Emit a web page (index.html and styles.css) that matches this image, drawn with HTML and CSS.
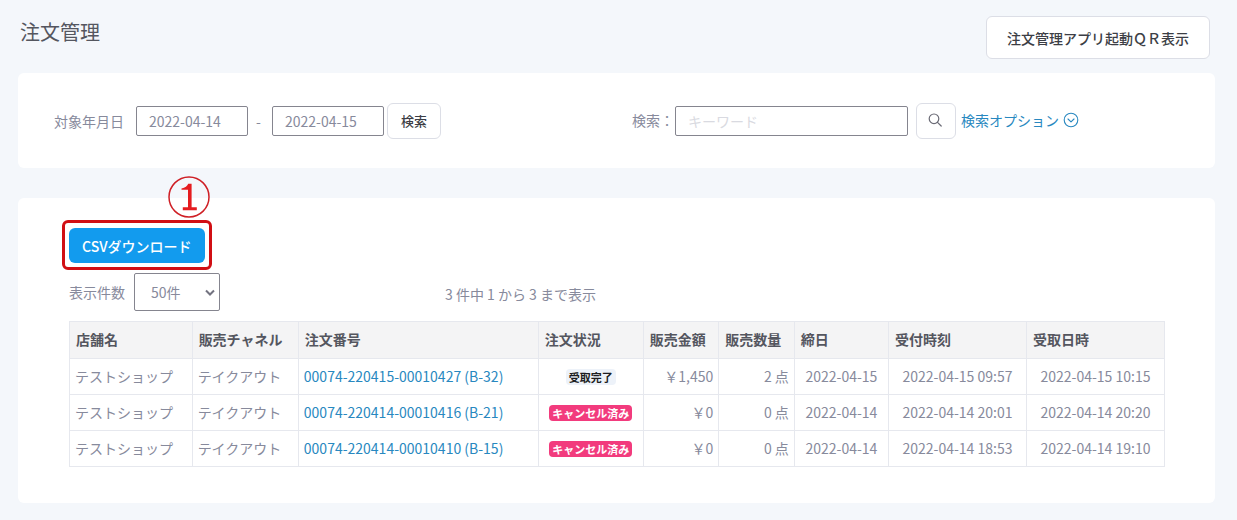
FILE: index.html
```html
<!DOCTYPE html>
<html lang="ja">
<head>
<meta charset="utf-8">
<meta name="viewport" content="width=device-width, initial-scale=1">
<title>注文管理</title>
<link rel="stylesheet" href="styles.css">
</head>
<body>
<header class="page-header">
  <h1 class="page-title">注文管理</h1>
  <button type="button" class="btn btn-large">注文管理アプリ起動ＱＲ表示</button>
</header>
<main>
  <form class="panel filters">
    <div class="filter-group">
      <label class="date-label" for="from">対象年月日</label>
      <input class="field date" id="from" type="text" value="2022-04-14">
      <span class="dash">-</span>
      <input class="field date" type="text" aria-label="終了日" value="2022-04-15">
      <button type="button" class="btn btn-search">検索</button>
    </div>
    <div class="filter-group">
      <label class="keyword-label" for="keyword">検索：</label>
      <input class="field keyword" id="keyword" type="text" placeholder="キーワード">
      <button type="button" class="btn btn-icon" aria-label="検索">
        <svg width="14" height="14" viewBox="0 0 14 14" fill="none" stroke="#6b6b76" stroke-width="1.2" stroke-linecap="round"><circle cx="6" cy="5.8" r="4.8"/><path d="M9.5 9.3l3.7 3.7"/></svg>
      </button>
      <a class="options" href="#">検索オプション<svg width="16" height="16" viewBox="0 0 16 16" fill="none" stroke="currentColor" stroke-width="1.1" stroke-linecap="round" stroke-linejoin="round"><circle cx="8" cy="8" r="6.8"/><path d="M5 7l3 2.9L11 7"/></svg></a>
    </div>
  </form>
  <section class="panel orders">
    <div class="download">
      <button type="button" class="btn-primary">CSVダウンロード</button>
      <div class="highlight"></div>
      <svg class="step" width="44" height="44" viewBox="0 0 44 44" role="img" aria-label="1"><circle cx="22" cy="22" r="20" fill="none" stroke="#cf1f25" stroke-width="1.5"/><path d="M14.5 13.5Q20 12.3 21.2 8.8H24.6V32.3H29.8V35.3H15.8V32.3H21V14.8H14.5z" fill="#e51c1f"/></svg>
    </div>
    <div class="toolbar">
      <label for="count">表示件数</label>
      <div class="select-wrap">
        <select class="field count" id="count"><option>50件</option></select>
        <svg class="chevron" width="10" height="8" viewBox="0 0 10 8" fill="none" stroke="#737380" stroke-width="2"><path d="M1 1.5l4 4 4-4"/></svg>
      </div>
      <p class="summary">3 件中 1 から 3 まで表示</p>
    </div>
    <table class="table">
      <colgroup><col class="c-shop"><col class="c-channel"><col class="c-number"><col class="c-status"><col class="c-amount"><col class="c-qty"><col class="c-close"><col class="c-time"><col class="c-time"></colgroup>
      <thead>
        <tr><th>店舗名</th><th>販売チャネル</th><th>注文番号</th><th>注文状況</th><th>販売金額</th><th>販売数量</th><th>締日</th><th>受付時刻</th><th>受取日時</th></tr>
      </thead>
      <tbody>
        <tr><td>テストショップ</td><td>テイクアウト</td><td><a href="#">00074-220415-00010427 (B-32)</a></td><td class="center"><span class="badge badge-done">受取完了</span></td><td class="right">￥1,450</td><td class="right">2 点</td><td class="center">2022-04-15</td><td class="center">2022-04-15 09:57</td><td class="center">2022-04-15 10:15</td></tr>
        <tr><td>テストショップ</td><td>テイクアウト</td><td><a href="#">00074-220414-00010416 (B-21)</a></td><td class="center"><span class="badge badge-cancel">キャンセル済み</span></td><td class="right">￥0</td><td class="right">0 点</td><td class="center">2022-04-14</td><td class="center">2022-04-14 20:01</td><td class="center">2022-04-14 20:20</td></tr>
        <tr><td>テストショップ</td><td>テイクアウト</td><td><a href="#">00074-220414-00010410 (B-15)</a></td><td class="center"><span class="badge badge-cancel">キャンセル済み</span></td><td class="right">￥0</td><td class="right">0 点</td><td class="center">2022-04-14</td><td class="center">2022-04-14 18:53</td><td class="center">2022-04-14 19:10</td></tr>
      </tbody>
    </table>
  </section>
</main>
</body>
</html>
```
FILE: styles.css
```css
* { box-sizing: border-box; }
body {
  margin: 0;
  padding: 16px 22px 17px 18px;
  background: #f4f7fb;
  color: #878a9c;
  font: 14px/20px "Noto Sans CJK JP", sans-serif;
}
a { color: #2888c0; text-decoration: none; }
button, input, select { font: inherit; color: inherit; }
button { cursor: pointer; }

.page-header {
  display: flex;
  justify-content: space-between;
  align-items: flex-start;
  padding-right: 5px;
  margin-bottom: 14px;
}
.page-title {
  margin: 0;
  padding-left: 2px;
  color: #54565f;
  font-size: 20px;
  font-weight: 400;
  line-height: 32px;
}

.btn {
  border: 1px solid #dcdee6;
  border-radius: 6px;
  background: #fff;
  color: #3c3e45;
  font-weight: 500;
}
.btn-large { height: 43px; padding: 0 20px; }
.btn-search { width: 54px; height: 36px; margin-left: 3px; padding: 0; font-size: 13px; }
.btn-icon {
  display: flex;
  align-items: center;
  justify-content: center;
  width: 40px;
  height: 36px;
  margin: 0 5px 0 8px;
  padding: 0 2px 2px 0;
}

.panel { background: #fff; border-radius: 6px; }
.filters {
  display: grid;
  grid-template-columns: 578px 1fr;
  padding: 30px 36px 29px;
  margin-bottom: 30px;
}
.filter-group { display: flex; align-items: center; white-space: nowrap; }
.field {
  border: 1px solid #85858f;
  border-radius: 2px;
  background: #fff;
}
.date, .keyword { height: 30px; padding: 0 12px; }
.date { width: 112px; }
.date-label { margin-right: 12px; }
.keyword-label { margin-right: 1px; padding-bottom: 2px; }
.dash { width: 24px; padding-left: 8px; }
.keyword { width: 233px; }
.keyword::placeholder { color: #d9dae1; opacity: 1; }
.options { display: flex; align-items: center; gap: 4px; padding-bottom: 2px; }

.orders { padding: 30px 50px 36px 51px; }
.download { position: relative; width: max-content; }
.btn-primary {
  display: block;
  height: 35px;
  padding: 0 14px 0 13px;
  border: 0;
  border-radius: 6px;
  background: #129bee;
  color: #fff;
  font-weight: 500;
}
.highlight {
  position: absolute;
  inset: -8px -7px -7px;
  border: 3px solid #d10f14;
  border-radius: 6px;
  pointer-events: none;
}
.step { position: absolute; top: -53px; left: 98px; }
.toolbar {
  display: flex;
  align-items: center;
  gap: 9px;
  margin: 10px 0;
}
.select-wrap { position: relative; width: 86px; }
.count {
  display: block;
  width: 100%;
  height: 38px;
  padding: 0 16px;
  appearance: none;
}
.chevron { position: absolute; top: 16px; right: 5px; pointer-events: none; }
.summary { margin: 0 0 0 216px; padding-top: 4px; }

.table {
  width: 100%;
  table-layout: fixed;
  border-collapse: collapse;
  white-space: nowrap;
}
.table th, .table td {
  border: 1px solid #e6e8ee;
  text-align: left;
}
.table th { padding: 7px 6px 9px; background: #f4f4f5; color: #54565f; font-weight: 700; }
.table td { padding: 7px 5px 8px; }
.table .center { text-align: center; }
.table .right { text-align: right; }
.c-shop { width: 11.2%; }
.c-channel { width: 9.7%; }
.c-number { width: 21.9%; }
.c-status { width: 9.6%; }
.c-amount { width: 6.9%; }
.c-qty { width: 6.9%; }
.c-close { width: 8.6%; }
.c-time { width: 12.6%; }
.badge {
  display: inline-block;
  padding: 0 3px;
  border-radius: 4px;
  font-size: 11px;
  font-weight: 700;
  line-height: 16px;
}
.badge-done { background: #edf2f9; color: #1c1d21; }
.badge-cancel { background: #f23b7d; color: #fff; }
```
